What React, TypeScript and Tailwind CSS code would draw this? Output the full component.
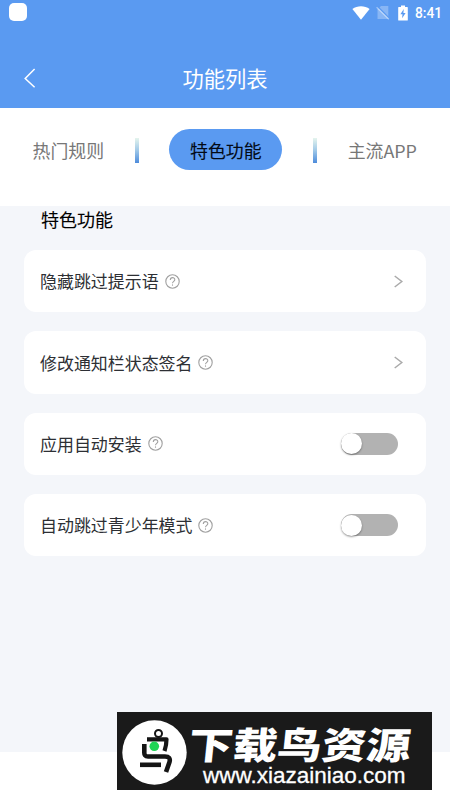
import { useState } from "react";

type Item = { label: string; kind: "link" | "switch" };

const tabs = ["热门规则", "特色功能", "主流APP"];

const items: Item[] = [
  { label: "隐藏跳过提示语", kind: "link" },
  { label: "修改通知栏状态签名", kind: "link" },
  { label: "应用自动安装", kind: "switch" },
  { label: "自动跳过青少年模式", kind: "switch" },
];

function StatusBar() {
  return (
    <div className="flex h-[25px] items-start justify-between pl-[9px] pr-[8px] pt-[3px]">
      <div className="h-[18px] w-[18px] rounded-[5px] bg-white" />
      <div className="flex h-[19px] items-center text-white">
        <svg className="h-[15px] w-[18px]" viewBox="0 0 18 15" fill="currentColor">
          <path d="M9 14.7 0.4 4C5.200 0.300 12.800 0.300 17.600 4Z" />
        </svg>
        <svg className="ml-[6px] h-[15px] w-[14px]" viewBox="0 0 14 15">
          <path d="M5 1h7.300v13H1.500V4.500Z" fill="#fff" opacity="0.28" />
          <path d="M1.600 1.600 13.600 13.600" stroke="#5a9af1" strokeWidth="1.400" />
          <path d="M0.600 2.200 12.800 14.300" stroke="#fff" strokeWidth="1.200" opacity="0.45" />
        </svg>
        <svg className="ml-[8px] h-[16px] w-[10px]" viewBox="0 0 10 16">
          <path d="M3 0.500h4V2h2.200q.6 0 .6.600v12.300q0 .6-.6.600H.8q-.6 0-.6-.6V2.600Q.2 2 .8 2H3Z" fill="#fff" />
          <path d="M5.800 4 2.400 9.300h2.100L4.100 13.200 7.600 7.900H5.400Z" fill="#5a9af1" />
        </svg>
        <span className="ml-[7px] w-[27px] pt-px font-[Roboto,sans-serif] text-[13.8px] font-medium leading-[19px]">8:41</span>
      </div>
    </div>
  );
}

function HelpIcon() {
  return (
    <svg className="ml-[6px] h-[15px] w-[15px] shrink-0" viewBox="0 0 15 15" fill="none" stroke="#a0a0a0" strokeWidth="1.100">
      <circle cx="7.500" cy="7.500" r="6.700" />
      <path d="M5.300 6C5.300 2.900 9.800 2.900 9.800 5.700C9.800 7.400 7.500 7.400 7.500 9.300" />
      <path d="M7.500 10.400v1.300" />
    </svg>
  );
}

function Switch() {
  const [on, setOn] = useState(false);
  return (
    <button
      onClick={() => setOn(!on)}
      className={`flex h-[22px] w-[57px] items-center rounded-full ${on ? "justify-end bg-[#5a9af1]" : "bg-[#b2b2b2]"}`}
    >
      <span className="h-[21px] w-[21px] rounded-full bg-white shadow-[0_1px_2px_rgba(0,0,0,0.4)]" />
    </button>
  );
}

function Separator() {
  return <div className="mt-[30px] h-[25px] w-[4px] bg-linear-to-b from-[#e5f4ed] via-[#9fc8e8] to-[#4d8bdb]" />;
}

function Watermark() {
  return (
    <div className="absolute left-[117px] top-[712px] flex h-[78px] w-[315px] bg-[#1a1a1a] pl-[5px] pt-[8px] text-white">
      <svg className="h-[65px] w-[65px] shrink-0" viewBox="0 0 65 65" fill="none">
        <circle cx="32.500" cy="32.500" r="32.200" fill="#fff" />
        <g stroke="#151515" strokeLinejoin="round">
          <circle cx="36.500" cy="13.500" r="3.500" strokeWidth="2" />
          <path d="M25 19.300H44.500Q44.500 25 42.500 31" strokeWidth="4.200" />
          <path d="M22.300 24V32Q22 36.500 26 36.500H43Q49 36.500 47.500 42L44 52" strokeWidth="4.600" />
          <path d="M18 44.800H39" strokeWidth="4.600" />
        </g>
        <circle cx="32.300" cy="26.300" r="4.800" fill="#20d455" />
      </svg>
      <div className="flex flex-col">
        <span className="ml-[2px] mt-px block w-[185px] origin-left -skew-x-5 scale-x-120 whitespace-nowrap font-['Noto_Sans_CJK_SC',sans-serif] text-[37px] font-black leading-[44px]">
          下载鸟资源
        </span>
        <span className="ml-[16px] font-['Liberation_Sans','Noto_Sans_CJK_SC',sans-serif] text-[22.5px] leading-[22px] [-webkit-text-stroke:0.3px_white]">
          www.xiazainiao.com
        </span>
      </div>
    </div>
  );
}

export default function App() {
  const [active, setActive] = useState(1);

  return (
    <div className="relative flex h-[800px] w-[450px] flex-col overflow-hidden bg-white font-['Noto_Sans_CJK_SC',sans-serif]">
      <header className="h-[107.5px] shrink-0 bg-[#5a9af1]">
        <StatusBar />
        <div className="grid h-[105px] grid-cols-[60px_1fr_60px] items-center text-white">
          <button className="pl-[24px]">
            <svg className="h-[20px] w-[12px]" viewBox="0 0 12 20" fill="none" stroke="currentColor" strokeWidth="1.500">
              <path d="M10.600 1 1.200 10.500 10.600 19.300" />
            </svg>
          </button>
          <h1 className="text-center text-[21.300px] leading-[30px]">功能列表</h1>
        </div>
      </header>

      {/* Tabs */}
      <nav className="flex h-[98.500px] shrink-0 items-start justify-between pl-[32.500px] pr-[33px]">
        {tabs.map((tab, i) => (
          <div key={tab} className="contents">
            {i > 0 && <Separator />}
            <button
              onClick={() => setActive(i)}
              className={`mt-[21.500px] h-[41px] whitespace-nowrap pt-[2px] text-[17.900px] ${
                active === i
                  ? "w-[113px] rounded-full bg-[#5a9af1] text-[#030a16] [-webkit-text-stroke:0.1px_#030a16]"
                  : "text-[#777]"
              }`}
            >
              {tab}
            </button>
          </div>
        ))}
      </nav>

      <main className="h-[546px] shrink-0 bg-[#f4f6fa] px-[24px]">
        <h2 className="pl-[17px] text-[18px] leading-[27px] text-black [-webkit-text-stroke:0.1px_black]">特色功能</h2>
        <div className="mt-[17px] flex flex-col gap-[19px]">
          {items.map((item) => (
            <div key={item.label} className="flex h-[62.300px] items-center rounded-[12px] bg-white pl-[16px] pr-[28px]">
              <span className="text-[16.950px] text-[#2d2f34]">{item.label}</span>
              <HelpIcon />
              <div className="ml-auto">
                {item.kind === "switch" ? (
                  <Switch />
                ) : (
                  <svg className="-mr-[5px] h-[13px] w-[9px]" viewBox="0 0 9 13" fill="none" stroke="#aaa" strokeWidth="1.500">
                    <path d="M0.700 1 7.800 6.500 0.700 12" />
                  </svg>
                )}
              </div>
            </div>
          ))}
        </div>
      </main>

      <Watermark />
    </div>
  );
}
